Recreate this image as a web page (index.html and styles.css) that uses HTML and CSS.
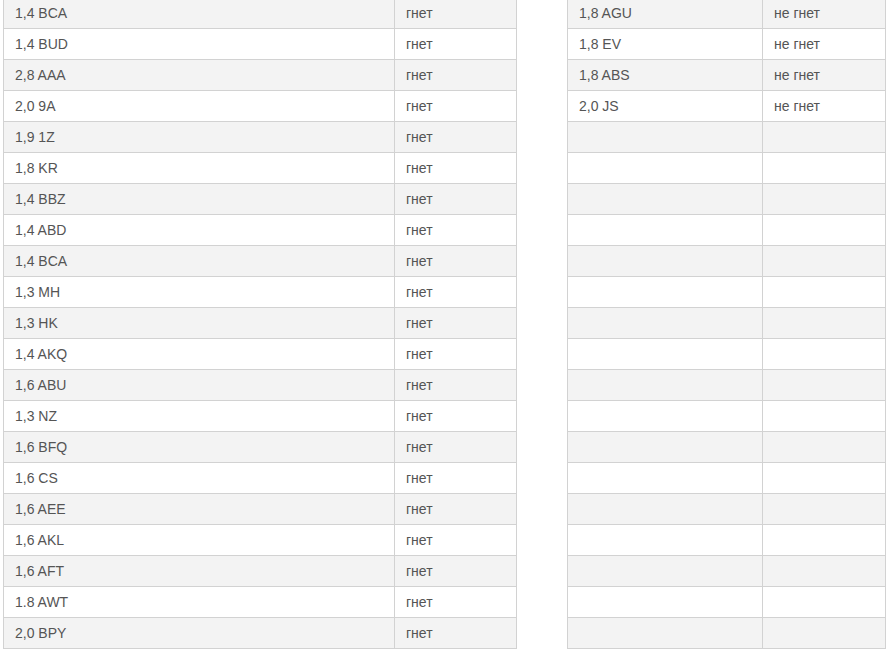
FILE: index.html
```html
<!DOCTYPE html>
<html>
<head>
<meta charset="utf-8">
<link rel="stylesheet" href="styles.css">
</head>
<body>
<div class="wrap">
<table class="tbl tbl-left">
<colgroup><col class="c1"><col class="c2"></colgroup>
<tbody>
<tr><td>1,4 BCA</td><td>гнет</td></tr>
<tr><td>1,4 BUD</td><td>гнет</td></tr>
<tr><td>2,8 AAA</td><td>гнет</td></tr>
<tr><td>2,0 9A</td><td>гнет</td></tr>
<tr><td>1,9 1Z</td><td>гнет</td></tr>
<tr><td>1,8 KR</td><td>гнет</td></tr>
<tr><td>1,4 BBZ</td><td>гнет</td></tr>
<tr><td>1,4 ABD</td><td>гнет</td></tr>
<tr><td>1,4 BCA</td><td>гнет</td></tr>
<tr><td>1,3 MH</td><td>гнет</td></tr>
<tr><td>1,3 HK</td><td>гнет</td></tr>
<tr><td>1,4 AKQ</td><td>гнет</td></tr>
<tr><td>1,6 ABU</td><td>гнет</td></tr>
<tr><td>1,3 NZ</td><td>гнет</td></tr>
<tr><td>1,6 BFQ</td><td>гнет</td></tr>
<tr><td>1,6 CS</td><td>гнет</td></tr>
<tr><td>1,6 AEE</td><td>гнет</td></tr>
<tr><td>1,6 AKL</td><td>гнет</td></tr>
<tr><td>1,6 AFT</td><td>гнет</td></tr>
<tr><td>1.8 AWT</td><td>гнет</td></tr>
<tr><td>2,0 BPY</td><td>гнет</td></tr>
</tbody>
</table>
<table class="tbl tbl-right">
<colgroup><col class="c3"><col class="c4"></colgroup>
<tbody>
<tr><td>1,8 AGU</td><td>не гнет</td></tr>
<tr><td>1,8 EV</td><td>не гнет</td></tr>
<tr><td>1,8 ABS</td><td>не гнет</td></tr>
<tr><td>2,0 JS</td><td>не гнет</td></tr>
<tr><td></td><td></td></tr>
<tr><td></td><td></td></tr>
<tr><td></td><td></td></tr>
<tr><td></td><td></td></tr>
<tr><td></td><td></td></tr>
<tr><td></td><td></td></tr>
<tr><td></td><td></td></tr>
<tr><td></td><td></td></tr>
<tr><td></td><td></td></tr>
<tr><td></td><td></td></tr>
<tr><td></td><td></td></tr>
<tr><td></td><td></td></tr>
<tr><td></td><td></td></tr>
<tr><td></td><td></td></tr>
<tr><td></td><td></td></tr>
<tr><td></td><td></td></tr>
<tr><td></td><td></td></tr>
</tbody>
</table>
</div>
</body>
</html>
```
FILE: styles.css
```css
html, body {
  margin: 0;
  padding: 0;
  background: #fff;
}
.wrap {
  display: flex;
  align-items: flex-start;
  gap: 50px;
  padding-left: 3px;
  margin-top: -3px;
}
.tbl {
  border-collapse: collapse;
  table-layout: fixed;
  font-family: "Liberation Sans", Arial, sans-serif;
  font-size: 14px;
  color: #555;
}
.tbl-left { width: 513px; }
.tbl-right { width: 318px; }
.c1 { width: 391px; }
.c2 { width: 122px; }
.c3 { width: 195px; }
.c4 { width: 123px; }
.tbl td {
  border: 1px solid #d2d2d2;
  height: 31px;
  padding: 0 10px 0 11px;
  box-sizing: border-box;
  white-space: nowrap;
  vertical-align: middle;
}
.tbl tr:nth-child(odd) td { background: #f3f3f3; }
.tbl tr:nth-child(even) td { background: #fff; }
```
